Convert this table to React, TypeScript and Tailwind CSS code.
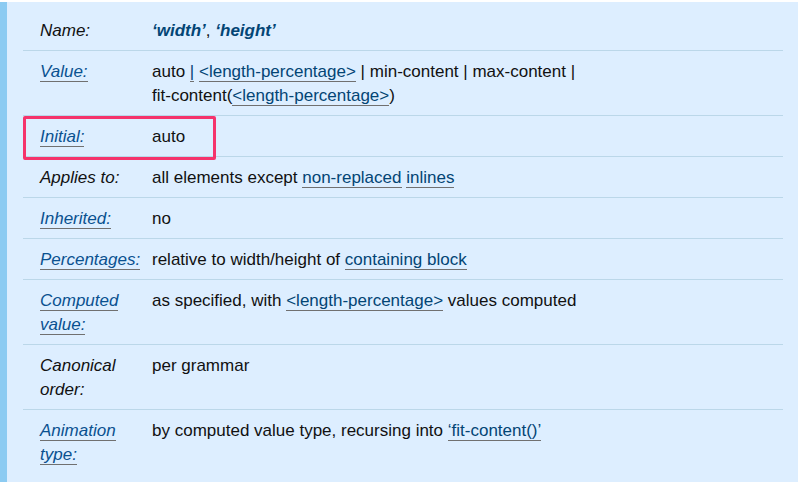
import React from 'react';

const L = ({ children }: { children: React.ReactNode }) => (
  <a className="text-[#034575] border-b border-[#707070]">{children}</a>
);

type Row = { label: React.ReactNode; link?: boolean; value: React.ReactNode; mark?: boolean };

const rows: Row[] = [
  {
    label: 'Name:',
    value: (
      <>
        <span className="font-bold italic text-[#034575]">‘width’</span>,{' '}
        <span className="font-bold italic text-[#034575]">‘height’</span>
      </>
    ),
  },
  {
    label: 'Value:',
    link: true,
    value: (
      <>
        auto <L>|</L> <L>&lt;length-percentage&gt;</L> | min-content | max-content |<br />
        fit-content(<L>&lt;length-percentage&gt;</L>)
      </>
    ),
  },
  { label: 'Initial:', link: true, value: 'auto', mark: true },
  {
    label: 'Applies to:',
    value: (
      <>
        all elements except <L>non-replaced</L> <L>inlines</L>
      </>
    ),
  },
  { label: 'Inherited:', link: true, value: 'no' },
  {
    label: 'Percentages:',
    link: true,
    value: (
      <>
        relative to width/height of <L>containing block</L>
      </>
    ),
  },
  {
    label: (
      <>
        Computed
        <br />
        value:
      </>
    ),
    link: true,
    value: (
      <>
        as specified, with <L>&lt;length-percentage&gt;</L> values computed
      </>
    ),
  },
  {
    label: (
      <>
        Canonical
        <br />
        order:
      </>
    ),
    value: 'per grammar',
  },
  {
    label: (
      <>
        Animation
        <br />
        type:
      </>
    ),
    link: true,
    value: (
      <>
        by computed value type, recursing into <L>‘fit-content()’</L>
      </>
    ),
  },
];

export default function App() {
  return (
    <div className="w-[798px] h-[485px] bg-white pt-[2px] font-['Liberation_Sans',Arial,sans-serif] text-[17px] leading-6 text-[#111]">
      <div className="bg-[#ddeeff] border-l-[7px] border-[#8ccbf2] pl-4 pr-[15px] py-2 w-[798px]">
        <div className="divide-y divide-[#bbd7e9]">
          {rows.map((r, i) => (
            <div key={i} className="relative flex">
              <div className="w-[129px] shrink-0 pl-[17px] pt-[9px] pb-[7px] italic">
                {r.link ? (
                  <span className="text-[#0a5190] border-b border-[#707070]">{r.label}</span>
                ) : (
                  r.label
                )}
              </div>
              <div className="flex-1 pt-[9px] pb-[7px]">{r.value}</div>
              {r.mark && (
                <div className="absolute left-0 top-0 w-[193px] h-[44px] border-[3px] border-[#f5336c] rounded-[2px]" />
              )}
            </div>
          ))}
        </div>
      </div>
    </div>
  );
}
